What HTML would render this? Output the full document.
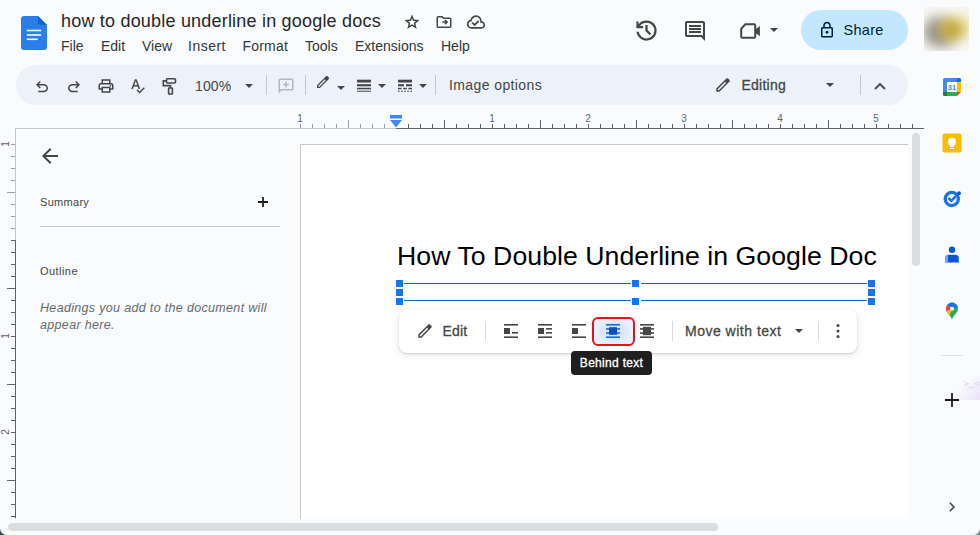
<!DOCTYPE html>
<html lang="en">
<head>
<meta charset="utf-8">
<title>how to double underline in google docs</title>
<style>
*{box-sizing:border-box;margin:0;padding:0}
html,body{width:980px;height:535px;overflow:hidden;background:#f9fbfd;font-family:"Liberation Sans",sans-serif;color:#1f1f1f}
.abs{position:absolute}
.t{position:absolute;white-space:nowrap;line-height:1}
svg{position:absolute;overflow:visible}
#title{left:61px;top:12px;font-size:18px;color:#26282a;letter-spacing:0.2px}
.menu{top:39px;font-size:14px;color:#33373a}
#toolbar{left:16px;top:65px;width:892px;height:40px;border-radius:20px;background:#edf2fa}
.tb{font-size:14px;color:#444746}
.sep{position:absolute;width:1px;background:#c7c7c7}
#share{left:801px;top:10px;width:107px;height:40px;border-radius:20px;background:#c2e7ff}
#sharet{left:843.500px;top:23px;font-size:14.5px;color:#001d35;letter-spacing:0.3px}
#panel{left:15px;top:128px;width:286px;height:391px;border-left:1px solid #c4c7c5;border-top:1px solid #c4c7c5;background:#f9fbfd}
#page{left:300px;top:144px;width:608px;height:375px;background:#fff;border-left:1px solid #c7c7c7;border-top:1px solid #c7c7c7}
#heading{left:397px;top:243px;letter-spacing:0.045px;font-size:26.670px;color:#000}
#ftb{left:398.500px;top:310px;width:458.500px;height:42.500px;border-radius:8px;background:#fff;box-shadow:0 1px 2px rgba(60,64,67,.2),0 2px 6px 2px rgba(60,64,67,.08)}
#tip{left:571px;top:351px;width:81px;height:24px;border-radius:4px;background:#1f1f1f;color:#fff;font-size:12px;text-align:center;line-height:24px;letter-spacing:0.3px;-webkit-text-stroke:0.3px #fff}
.rl{font-size:10px;color:#5f6368}
.h{position:absolute;width:7px;height:7px;background:#1a73e8}
</style>
</head>
<body>
<!-- header -->
<svg class="abs" style="left:21px;top:16px" width="26" height="34" viewBox="0 0 26 34"><path d="M3 0h14l9 9v22a3 3 0 0 1-3 3H3a3 3 0 0 1-3-3V3a3 3 0 0 1 3-3z" fill="#2b7de9"/><path d="M17 0l9 9h-6a3 3 0 0 1-3-3z" fill="#0c67d6"/><rect x="5.800" y="13.700" width="14.300" height="1.600" fill="#fff"/><rect x="5.800" y="18.200" width="14.300" height="1.600" fill="#fff"/><rect x="5.800" y="22.500" width="11" height="1.600" fill="#fff"/></svg>
<div class="t" id="title">how to double underline in google docs</div>
<div class="t menu" style="left:61px">File</div>
<div class="t menu" style="left:101px">Edit</div>
<div class="t menu" style="left:142px">View</div>
<div class="t menu" style="left:188px;letter-spacing:0.5px">Insert</div>
<div class="t menu" style="left:242.500px;letter-spacing:0.2px">Format</div>
<div class="t menu" style="left:305px">Tools</div>
<div class="t menu" style="left:355px">Extensions</div>
<div class="t menu" style="left:441px">Help</div>

<div class="abs" id="share"></div>
<div class="t" id="sharet">Share</div>

<!-- toolbar -->
<div class="abs" id="toolbar"></div>
<div class="t tb" style="left:195px;top:79px;letter-spacing:0.1px">100%</div>
<div class="t tb" style="left:449px;top:78px;letter-spacing:0.4px">Image options</div>
<div class="t tb" style="left:741.500px;top:78px;letter-spacing:0.25px;-webkit-text-stroke:0.3px #444746">Editing</div>
<div class="sep" style="left:266px;top:75px;height:20px"></div>
<div class="sep" style="left:305px;top:75px;height:20px"></div>
<div class="sep" style="left:435px;top:75px;height:20px"></div>
<div class="sep" style="left:860px;top:75px;height:20px"></div>


<!-- header icons -->
<svg style="left:403px;top:13px" width="18" height="18" viewBox="0 -960 960 960" fill="#444746"><path d="m354-287 126-76 126 77-33-144 111-96-146-13-58-136-58 135-146 13 111 97-33 143ZM233-120l65-281L80-590l288-25 112-265 112 265 288 25-218 189 65 281-247-149-247 149Zm247-350Z"/></svg>
<svg style="left:435px;top:13px" width="18" height="18" viewBox="0 -960 960 960" fill="#444746"><path d="M160-160q-33 0-56.500-23.500T80-240v-480q0-33 23.500-56.500T160-800h240l80 80h320q33 0 56.500 23.500T880-640v400q0 33-23.500 56.500T800-160H160Zm0-80h640v-400H447l-80-80H160v480Zm0 0v-480 480Zm400-100 140-140-140-140-56 56 44 44H400v80h148l-44 44 56 56Z"/></svg>
<svg style="left:466px;top:12px" width="20" height="20" viewBox="0 -960 960 960" fill="#444746"><path d="m414-280 226-226-58-58-169 169-84-84-57 57 142 142ZM260-160q-91 0-155.500-63T40-377q0-78 47-139t123-78q25-92 100-149t170-57q117 0 198.500 81.500T760-520q69 8 114.500 59.500T920-340q0 75-52.500 127.500T740-160H260Zm0-80h480q42 0 71-29t29-71q0-42-29-71t-71-29h-60v-80q0-83-58.500-141.500T480-720q-83 0-141.500 58.500T280-520h-20q-58 0-99 41t-41 99q0 58 41 99t99 41Zm220-240Z"/></svg>

<svg style="left:632.500px;top:16.500px" width="27" height="27" viewBox="0 -960 960 960" fill="#444746"><path d="M480-120q-138 0-240.500-91.500T122-440h82q14 104 92.500 172T480-200q117 0 198.500-81.500T760-480q0-117-81.500-198.500T480-760q-69 0-129 32t-101 88h110v80H120v-240h80v94q51-64 124.500-99T480-840q75 0 140.500 28.500t114 77q48.500 48.500 77 114T840-480q0 75-28.500 140.500t-77 114q-48.500 48.500-114 77T480-120Zm112-192L440-464v-216h80v184l128 128-56 56Z"/></svg>
<svg style="left:683px;top:19px" width="24" height="24" viewBox="0 -960 960 960" fill="#444746"><path d="M240-400h480v-80H240v80Zm0-120h480v-80H240v80Zm0-120h480v-80H240v80ZM880-80 720-240H160q-33 0-56.500-23.500T80-320v-480q0-33 23.500-56.500T160-880h640q33 0 56.500 23.500T880-800v720ZM160-320h594l46 45v-525H160v480Zm0 0v-480 480Z"/></svg>
<svg style="left:738px;top:19px" width="24" height="24" viewBox="0 0 24 24"><path d="M3.200 9.800L7.200 5.300H16.200a1 1 0 0 1 1 1V17.700a1 1 0 0 1-1 1H4.200a1 1 0 0 1-1-1z" fill="none" stroke="#444746" stroke-width="2" stroke-linejoin="round"/><path d="M17.500 10.200L21.900 7V17.200L17.500 14z" fill="#444746"/></svg>
<svg style="left:770px;top:28px" width="8" height="4" viewBox="0 0 8 4"><path d="M0 0h8L4 4z" fill="#444746"/></svg>
<svg style="left:818px;top:21px" width="18" height="18" viewBox="0 -960 960 960" fill="#001d35"><path d="M240-80q-33 0-56.500-23.500T160-160v-400q0-33 23.500-56.500T240-640h40v-80q0-83 58.500-141.500T480-920q83 0 141.500 58.500T680-720v80h40q33 0 56.500 23.500T800-560v400q0 33-23.500 56.500T720-80H240Zm0-80h480v-400H240v400Zm240-120q33 0 56.500-23.500T560-360q0-33-23.500-56.500T480-440q-33 0-56.500 23.500T400-360q0 33 23.500 56.500T480-280ZM360-640h240v-80q0-50-35-85t-85-35q-50 0-85 35t-35 85v80ZM240-160v-400 400Z"/></svg>

<!-- toolbar icons -->
<svg style="left:33px;top:78px" width="18" height="18" viewBox="0 -960 960 960" fill="#444746"><path d="M280-200v-80h284q63 0 109.500-40T720-420q0-60-46.500-100T564-560H312l104 104-56 56-200-200 200-200 56 56-104 104h252q97 0 166.500 63T800-420q0 94-69.500 157T564-200H280Z"/></svg>
<svg style="left:65px;top:78px" width="18" height="18" viewBox="0 -960 960 960" fill="#444746"><path d="M396-200q-97 0-166.500-63T160-420q0-94 69.500-157T396-640h252L544-744l56-56 200 200-200 200-56-56 104-104H396q-63 0-109.500 40T240-420q0 60 46.500 100T396-280h284v80H396Z"/></svg>
<svg style="left:97px;top:77px" width="18" height="18" viewBox="0 -960 960 960" fill="#444746"><path d="M640-640v-120H320v120h-80v-200h480v200h-80Zm-480 80h640-640Zm560 100q17 0 28.500-11.500T760-500q0-17-11.500-28.500T720-540q-17 0-28.500 11.500T680-500q0 17 11.500 28.500T720-460Zm-80 260v-160H320v160h320Zm80 80H240v-160H80v-240q0-51 35-85.500t85-34.500h560q51 0 85.500 34.500T880-520v240H720v160Zm80-240v-160q0-17-11.500-28.500T760-560H200q-17 0-28.500 11.500T160-520v160h80v-80h480v80h80Z"/></svg>
<svg style="left:129px;top:76.500px" width="18" height="18" viewBox="0 -960 960 960" fill="#444746"><path d="M564-80 394-250l56-56 114 114 226-226 56 56L564-80ZM120-320l194-520h94l194 520h-92l-46-132H254l-46 132h-88Zm162-208h156l-76-216h-4l-76 216Z"/></svg>
<svg style="left:161px;top:77px" width="18" height="18" viewBox="0 0 18 18" fill="none" stroke="#444746" stroke-width="1.600"><rect x="5.500" y="1.800" width="9" height="4.200" rx="1"/><path d="M5.500 3.900H2.300V8.600H9.500V11"/><rect x="7.600" y="11" width="3.800" height="6" rx="0.500"/></svg>
<svg style="left:245px;top:84px" width="8" height="4" viewBox="0 0 8 4"><path d="M0 0h8L4 4z" fill="#444746"/></svg>
<svg style="left:277px;top:77px" width="18" height="18" viewBox="0 -960 960 960" fill="#b4b8bd"><path d="M440-400h80v-120h120v-80H520v-120h-80v120H320v80h120v120ZM80-80v-720q0-33 23.500-56.500T160-880h640q33 0 56.500 23.500T880-800v480q0 33-23.500 56.500T800-240H240L80-80Zm126-240h594v-480H160v525l46-45Zm-46 0v-480 480Z"/></svg>
<svg style="left:315px;top:74px" width="16" height="16" viewBox="0 -960 960 960" fill="#444746"><path d="M200-200h57l391-391-57-57-391 391v57Zm-80 80v-170l528-527q12-11 26.500-17t30.500-6q16 0 31 6t26 18l55 56q12 11 17.500 26t5.500 30q0 16-5.500 30.500T817-647L290-120H120Zm640-584-56-56 56 56Zm-141 85-28-29 57 57-29-28Z"/></svg>
<svg style="left:337px;top:86px" width="8" height="4" viewBox="0 0 8 4"><path d="M0 0h8L4 4z" fill="#444746"/></svg>
<svg style="left:357px;top:79px" width="14" height="14" viewBox="0 0 14 14" fill="#444746"><rect x="0" y="0.700" width="14" height="2.800"/><rect x="0" y="5.200" width="14" height="2.100"/><rect x="0" y="8.800" width="14" height="1.500"/><rect x="0" y="11.700" width="14" height="1"/></svg>
<svg style="left:378px;top:84px" width="8" height="4" viewBox="0 0 8 4"><path d="M0 0h8L4 4z" fill="#444746"/></svg>
<svg style="left:398px;top:79px" width="14" height="14" viewBox="0 0 14 14" fill="#444746"><rect x="0" y="0.700" width="14" height="2.800"/><rect x="0" y="5.200" width="6" height="2.100"/><rect x="8" y="5.200" width="6" height="2.100"/><rect x="0" y="8.800" width="3.600" height="1.500"/><rect x="5.200" y="8.800" width="3.600" height="1.500"/><rect x="10.400" y="8.800" width="3.600" height="1.500"/><rect x="0" y="11.700" width="1.500" height="1.200"/><rect x="3.100" y="11.700" width="1.500" height="1.200"/><rect x="6.200" y="11.700" width="1.500" height="1.200"/><rect x="9.300" y="11.700" width="1.500" height="1.200"/><rect x="12.400" y="11.700" width="1.500" height="1.200"/></svg>
<svg style="left:419px;top:84px" width="8" height="4" viewBox="0 0 8 4"><path d="M0 0h8L4 4z" fill="#444746"/></svg>
<svg style="left:714px;top:76px" width="18" height="18" viewBox="0 -960 960 960" fill="#444746"><path d="M200-200h57l391-391-57-57-391 391v57Zm-80 80v-170l528-527q12-11 26.500-17t30.500-6q16 0 31 6t26 18l55 56q12 11 17.500 26t5.500 30q0 16-5.500 30.500T817-647L290-120H120Zm640-584-56-56 56 56Zm-141 85-28-29 57 57-29-28Z"/></svg>
<svg style="left:826px;top:83px" width="8" height="4" viewBox="0 0 8 4"><path d="M0 0h8L4 4z" fill="#444746"/></svg>
<svg style="left:874px;top:82px" width="12" height="8" viewBox="0 0 12 8" fill="none" stroke="#444746" stroke-width="1.800"><path d="M1 7L6 2L11 7"/></svg>


<!-- rulers -->
<div class="abs" style="left:300px;top:128px;width:97px;height:1px;background:#c4c7c5"></div>
<div class="abs" style="left:396px;top:128px;width:528px;height:1px;background:#5f6368"></div>
<div class="abs" style="left:300px;top:124px;width:1px;height:4px;background:#9aa0a6"></div>
<div class="abs" style="left:312px;top:124px;width:1px;height:4px;background:#9aa0a6"></div>
<div class="abs" style="left:324px;top:124px;width:1px;height:4px;background:#9aa0a6"></div>
<div class="abs" style="left:336px;top:124px;width:1px;height:4px;background:#9aa0a6"></div>
<div class="abs" style="left:348px;top:120px;width:1px;height:8px;background:#9aa0a6"></div>
<div class="abs" style="left:360px;top:124px;width:1px;height:4px;background:#9aa0a6"></div>
<div class="abs" style="left:372px;top:124px;width:1px;height:4px;background:#9aa0a6"></div>
<div class="abs" style="left:384px;top:124px;width:1px;height:4px;background:#9aa0a6"></div>
<div class="abs" style="left:408px;top:124px;width:1px;height:4px;background:#5f6368"></div>
<div class="abs" style="left:420px;top:124px;width:1px;height:4px;background:#5f6368"></div>
<div class="abs" style="left:432px;top:124px;width:1px;height:4px;background:#5f6368"></div>
<div class="abs" style="left:444px;top:120px;width:1px;height:8px;background:#5f6368"></div>
<div class="abs" style="left:456px;top:124px;width:1px;height:4px;background:#5f6368"></div>
<div class="abs" style="left:468px;top:124px;width:1px;height:4px;background:#5f6368"></div>
<div class="abs" style="left:480px;top:124px;width:1px;height:4px;background:#5f6368"></div>
<div class="abs" style="left:492px;top:124px;width:1px;height:4px;background:#5f6368"></div>
<div class="abs" style="left:504px;top:124px;width:1px;height:4px;background:#5f6368"></div>
<div class="abs" style="left:516px;top:124px;width:1px;height:4px;background:#5f6368"></div>
<div class="abs" style="left:528px;top:124px;width:1px;height:4px;background:#5f6368"></div>
<div class="abs" style="left:540px;top:120px;width:1px;height:8px;background:#5f6368"></div>
<div class="abs" style="left:552px;top:124px;width:1px;height:4px;background:#5f6368"></div>
<div class="abs" style="left:564px;top:124px;width:1px;height:4px;background:#5f6368"></div>
<div class="abs" style="left:576px;top:124px;width:1px;height:4px;background:#5f6368"></div>
<div class="abs" style="left:588px;top:124px;width:1px;height:4px;background:#5f6368"></div>
<div class="abs" style="left:600px;top:124px;width:1px;height:4px;background:#5f6368"></div>
<div class="abs" style="left:612px;top:124px;width:1px;height:4px;background:#5f6368"></div>
<div class="abs" style="left:624px;top:124px;width:1px;height:4px;background:#5f6368"></div>
<div class="abs" style="left:636px;top:120px;width:1px;height:8px;background:#5f6368"></div>
<div class="abs" style="left:648px;top:124px;width:1px;height:4px;background:#5f6368"></div>
<div class="abs" style="left:660px;top:124px;width:1px;height:4px;background:#5f6368"></div>
<div class="abs" style="left:672px;top:124px;width:1px;height:4px;background:#5f6368"></div>
<div class="abs" style="left:684px;top:124px;width:1px;height:4px;background:#5f6368"></div>
<div class="abs" style="left:696px;top:124px;width:1px;height:4px;background:#5f6368"></div>
<div class="abs" style="left:708px;top:124px;width:1px;height:4px;background:#5f6368"></div>
<div class="abs" style="left:720px;top:124px;width:1px;height:4px;background:#5f6368"></div>
<div class="abs" style="left:732px;top:120px;width:1px;height:8px;background:#5f6368"></div>
<div class="abs" style="left:744px;top:124px;width:1px;height:4px;background:#5f6368"></div>
<div class="abs" style="left:756px;top:124px;width:1px;height:4px;background:#5f6368"></div>
<div class="abs" style="left:768px;top:124px;width:1px;height:4px;background:#5f6368"></div>
<div class="abs" style="left:780px;top:124px;width:1px;height:4px;background:#5f6368"></div>
<div class="abs" style="left:792px;top:124px;width:1px;height:4px;background:#5f6368"></div>
<div class="abs" style="left:804px;top:124px;width:1px;height:4px;background:#5f6368"></div>
<div class="abs" style="left:816px;top:124px;width:1px;height:4px;background:#5f6368"></div>
<div class="abs" style="left:828px;top:120px;width:1px;height:8px;background:#5f6368"></div>
<div class="abs" style="left:840px;top:124px;width:1px;height:4px;background:#5f6368"></div>
<div class="abs" style="left:852px;top:124px;width:1px;height:4px;background:#5f6368"></div>
<div class="abs" style="left:864px;top:124px;width:1px;height:4px;background:#5f6368"></div>
<div class="abs" style="left:876px;top:124px;width:1px;height:4px;background:#5f6368"></div>
<div class="abs" style="left:888px;top:124px;width:1px;height:4px;background:#5f6368"></div>
<div class="abs" style="left:900px;top:124px;width:1px;height:4px;background:#5f6368"></div>
<div class="abs" style="left:912px;top:124px;width:1px;height:4px;background:#5f6368"></div>
<div class="t rl" style="left:294px;top:114px;width:12px;text-align:center">1</div>
<div class="t rl" style="left:486px;top:114px;width:12px;text-align:center">1</div>
<div class="t rl" style="left:582px;top:114px;width:12px;text-align:center">2</div>
<div class="t rl" style="left:678px;top:114px;width:12px;text-align:center">3</div>
<div class="t rl" style="left:774px;top:114px;width:12px;text-align:center">4</div>
<div class="t rl" style="left:870px;top:114px;width:12px;text-align:center">5</div>
<svg style="left:390px;top:115px" width="12" height="13" viewBox="0 0 12 13"><rect x="0" y="0" width="12" height="3.500" fill="#4285f4"/><path d="M0 5h12L6 12.500z" fill="#4285f4"/></svg>
<div class="abs" style="left:15px;top:240px;width:1px;height:278px;background:#5f6368;z-index:3"></div>
<div class="abs" style="left:11px;top:144px;width:4px;height:1px;background:#9aa0a6"></div>
<div class="abs" style="left:11px;top:156px;width:4px;height:1px;background:#9aa0a6"></div>
<div class="abs" style="left:11px;top:168px;width:4px;height:1px;background:#9aa0a6"></div>
<div class="abs" style="left:11px;top:180px;width:4px;height:1px;background:#9aa0a6"></div>
<div class="abs" style="left:7px;top:192px;width:8px;height:1px;background:#9aa0a6"></div>
<div class="abs" style="left:11px;top:204px;width:4px;height:1px;background:#9aa0a6"></div>
<div class="abs" style="left:11px;top:216px;width:4px;height:1px;background:#9aa0a6"></div>
<div class="abs" style="left:11px;top:228px;width:4px;height:1px;background:#9aa0a6"></div>
<div class="abs" style="left:11px;top:240px;width:4px;height:1px;background:#5f6368"></div>
<div class="abs" style="left:11px;top:252px;width:4px;height:1px;background:#5f6368"></div>
<div class="abs" style="left:11px;top:264px;width:4px;height:1px;background:#5f6368"></div>
<div class="abs" style="left:11px;top:276px;width:4px;height:1px;background:#5f6368"></div>
<div class="abs" style="left:7px;top:288px;width:8px;height:1px;background:#5f6368"></div>
<div class="abs" style="left:11px;top:300px;width:4px;height:1px;background:#5f6368"></div>
<div class="abs" style="left:11px;top:312px;width:4px;height:1px;background:#5f6368"></div>
<div class="abs" style="left:11px;top:324px;width:4px;height:1px;background:#5f6368"></div>
<div class="abs" style="left:11px;top:336px;width:4px;height:1px;background:#5f6368"></div>
<div class="abs" style="left:11px;top:348px;width:4px;height:1px;background:#5f6368"></div>
<div class="abs" style="left:11px;top:360px;width:4px;height:1px;background:#5f6368"></div>
<div class="abs" style="left:11px;top:372px;width:4px;height:1px;background:#5f6368"></div>
<div class="abs" style="left:7px;top:384px;width:8px;height:1px;background:#5f6368"></div>
<div class="abs" style="left:11px;top:396px;width:4px;height:1px;background:#5f6368"></div>
<div class="abs" style="left:11px;top:408px;width:4px;height:1px;background:#5f6368"></div>
<div class="abs" style="left:11px;top:420px;width:4px;height:1px;background:#5f6368"></div>
<div class="abs" style="left:11px;top:432px;width:4px;height:1px;background:#5f6368"></div>
<div class="abs" style="left:11px;top:444px;width:4px;height:1px;background:#5f6368"></div>
<div class="abs" style="left:11px;top:456px;width:4px;height:1px;background:#5f6368"></div>
<div class="abs" style="left:11px;top:468px;width:4px;height:1px;background:#5f6368"></div>
<div class="abs" style="left:7px;top:480px;width:8px;height:1px;background:#5f6368"></div>
<div class="abs" style="left:11px;top:492px;width:4px;height:1px;background:#5f6368"></div>
<div class="abs" style="left:11px;top:504px;width:4px;height:1px;background:#5f6368"></div>
<div class="abs" style="left:11px;top:516px;width:4px;height:1px;background:#5f6368"></div>
<div class="t rl" style="left:0px;top:138px;width:12px;height:12px;line-height:12px;text-align:center;transform:rotate(-90deg)">1</div>
<div class="t rl" style="left:0px;top:330px;width:12px;height:12px;line-height:12px;text-align:center;transform:rotate(-90deg)">1</div>
<div class="t rl" style="left:0px;top:426px;width:12px;height:12px;line-height:12px;text-align:center;transform:rotate(-90deg)">2</div>

<!-- left panel -->
<div class="abs" id="panel"></div>
<div class="t" style="left:40px;top:197px;font-size:11px;color:#444746;letter-spacing:0.3px">Summary</div>
<div class="abs" style="left:40px;top:226px;width:240px;height:1px;background:#c4c7c5"></div>
<div class="t" style="left:40px;top:266px;font-size:11px;color:#444746;letter-spacing:0.45px">Outline</div>
<div class="t" style="left:40px;top:300px;font-size:12.500px;color:#676b70;font-style:italic;line-height:17px;white-space:normal;width:250px;letter-spacing:0.33px">Headings you add to the document will appear here.</div>

<!-- page -->
<div class="abs" id="page"></div>
<div class="t" id="heading">How To Double Underline in Google Doc</div>

<!-- floating toolbar -->
<div class="abs" id="ftb"></div>
<div class="t" style="left:442.500px;top:324px;font-size:14px;color:#444746;letter-spacing:0.15px;-webkit-text-stroke:0.3px #444746">Edit</div>
<div class="t" style="left:685px;top:324px;font-size:14px;color:#444746;letter-spacing:0.5px;-webkit-text-stroke:0.3px #444746">Move with text</div>

<!-- panel icons -->
<svg style="left:38px;top:144px" width="24" height="24" viewBox="0 -960 960 960" fill="#444746"><path d="m313-440 224 224-57 56-320-320 320-320 57 56-224 224h487v80H313Z"/></svg>
<svg style="left:258px;top:197px" width="10" height="10" viewBox="0 0 10 10" stroke="#1f1f1f" stroke-width="1.800"><path d="M5 0V10M0 5H10"/></svg>

<!-- selection -->
<div class="abs" style="left:404px;top:283px;width:226.500px;height:1px;background:#1a5fb4"></div><div class="abs" style="left:640.500px;top:283px;width:226px;height:1px;background:#1a5fb4"></div>
<div class="abs" style="left:404px;top:300px;width:226.500px;height:1px;background:#1a5fb4"></div><div class="abs" style="left:640.500px;top:300px;width:226px;height:1px;background:#1a5fb4"></div>
<div class="h" style="left:396px;top:280px"></div>
<div class="h" style="left:396px;top:289px"></div>
<div class="h" style="left:396px;top:298px"></div>
<div class="h" style="left:632px;top:280px"></div>
<div class="h" style="left:632px;top:298px"></div>
<div class="h" style="left:868px;top:280px"></div>
<div class="h" style="left:868px;top:289px"></div>
<div class="h" style="left:868px;top:298px"></div>

<!-- scrollbars -->
<div class="abs" style="left:912px;top:133px;width:8px;height:132.500px;border-radius:4px;background:#dadce0"></div>
<div class="abs" style="left:8px;top:523px;width:710px;height:7.500px;border-radius:4px;background:#dadce0"></div>

<!-- avatar -->
<div class="abs" style="left:924px;top:7px;width:45px;height:44px;overflow:hidden;background:#f6f6f3"><div class="abs" style="left:-10px;top:-10px;width:65px;height:64px;filter:blur(4px);background:radial-gradient(ellipse 15px 14px at 37px 33px,#b99d3c 0%,rgba(200,175,75,.85) 55%,rgba(220,205,130,0) 100%),radial-gradient(ellipse 20px 18px at 42px 31px,#dcc764 0%,rgba(232,220,140,.85) 50%,rgba(240,235,190,0) 100%),radial-gradient(ellipse 24px 21px at 27px 35px,#857d6f 0%,rgba(150,145,132,.85) 50%,rgba(246,246,243,0) 100%),#f6f6f3"></div></div>

<!-- side panel -->
<svg style="left:943px;top:78px" width="18" height="18" viewBox="0 0 18 18"><rect x="4" y="4" width="10" height="10" fill="#fff"/><path d="M0 1.500A1.500 1.500 0 0 1 1.500 0H14v4H4v10H0z" fill="#4285f4"/><path d="M14 0h2.500A1.500 1.500 0 0 1 18 1.500V4h-4z" fill="#1967d2"/><rect x="14" y="4" width="4" height="10" fill="#fbbc04"/><path d="M14 14h4l-4 4z" fill="#ea4335"/><rect x="4" y="14" width="10" height="4" fill="#34a853"/><path d="M0 14h4v4H1.500A1.500 1.500 0 0 1 0 16.500z" fill="#188038"/><text x="9" y="12.300" font-family="Liberation Sans, sans-serif" font-size="7.500" font-weight="bold" fill="#4285f4" text-anchor="middle">31</text></svg>
<svg style="left:942px;top:133px" width="20" height="20" viewBox="0 0 20 20"><rect x="0.500" y="0.500" width="19" height="19" rx="2" fill="#fbbc04"/><circle cx="10" cy="8.800" r="4" fill="#fff"/><rect x="8" y="11.500" width="4" height="2.500" fill="#fff"/><rect x="8" y="14.800" width="4" height="1.200" fill="#fff"/></svg>
<svg style="left:942px;top:189px" width="20" height="20" viewBox="0 0 20 20" fill="none"><circle cx="9.800" cy="10" r="6.600" stroke="#1a73e8" stroke-width="3.300"/><path d="M6.300 8.800l3 3L15.800 5.200" stroke="#1a73e8" stroke-width="2.600"/><circle cx="17" cy="4.200" r="1.900" fill="#0b57d0"/></svg>
<svg style="left:944px;top:246px" width="16" height="18" viewBox="0 0 16 18"><circle cx="8" cy="3.800" r="3.200" fill="#0b57d0"/><path d="M1 16.500V12.700a4 4 0 0 1 4-4H11a4 4 0 0 1 4 4V16.500z" fill="#0b57d0"/><path d="M1 16.500V12.700a4 4 0 0 1 3-3.900V16.500z" fill="#7aa5ee"/><path d="M15 16.500V12.700a4 4 0 0 0-1.200-2.900V16.500z" fill="#3c78dc"/></svg>
<svg style="left:945px;top:302px" width="14" height="18" viewBox="0 0 14 18"><defs><clipPath id="pin"><path d="M7 .6A6.100 6.100 0 0 0 .9 6.700C.9 10.500 5.600 13 7 17.400 8.400 13 13.100 10.500 13.100 6.700A6.100 6.100 0 0 0 7 .6z"/></clipPath></defs><g clip-path="url(#pin)"><rect width="14" height="18" fill="#34a853"/><path d="M7 6.700L1.500 2 3-1H14V5z" fill="#1a73e8"/><path d="M7 6.700L1.500 2-1 3V9.500L1.200 9.900z" fill="#ea4335"/><path d="M7 6.700L.5 9.500 4 14.500z" fill="#fbbc04"/><circle cx="7" cy="6.700" r="2" fill="#fff"/></g></svg>
<div class="abs" style="left:941px;top:355px;width:22px;height:1px;background:#dfe1e5"></div>
<div class="abs" style="left:946px;top:376px;width:34px;height:24px;border-top-left-radius:10px;background:linear-gradient(135deg,rgba(249,251,253,0) 42%,#eae2f8 100%)"></div>
<div class="t" style="left:963px;top:380px;font-size:7.500px;letter-spacing:-0.8px;color:#cfcfd8;font-family:'DejaVu Sans',sans-serif">&gt;‿&lt;</div>
<svg style="left:945px;top:393px" width="14" height="14" viewBox="0 0 14 14" stroke="#1f1f1f" stroke-width="1.800"><path d="M7 0V14M0 7H14"/></svg>
<svg style="left:949px;top:502px" width="6" height="10" viewBox="0 0 6 10" fill="none" stroke="#444746" stroke-width="1.600"><path d="M0.800 0.800L5 5L0.800 9.200"/></svg>

<!-- floating toolbar icons -->
<svg style="left:416px;top:322px" width="18" height="18" viewBox="0 -960 960 960" fill="#444746"><path d="M200-200h57l391-391-57-57-391 391v57Zm-80 80v-170l528-527q12-11 26.500-17t30.500-6q16 0 31 6t26 18l55 56q12 11 17.500 26t5.500 30q0 16-5.500 30.500T817-647L290-120H120Zm640-584-56-56 56 56Zm-141 85-28-29 57 57-29-28Z"/></svg>
<div class="sep" style="left:485px;top:321px;height:20px;background:#dadce0"></div>
<svg style="left:504px;top:324px" width="14" height="14" viewBox="0 0 14 14" fill="#444746"><rect x="0" y="0" width="14" height="1.600"/><rect x="0" y="4" width="6" height="6"/><rect x="8" y="8" width="6" height="1.600"/><rect x="0" y="12.400" width="14" height="1.600"/></svg>
<svg style="left:538px;top:324px" width="14" height="14" viewBox="0 0 14 14" fill="#444746"><rect x="0" y="0" width="14" height="1.600"/><rect x="0" y="4" width="6" height="6"/><rect x="8" y="4" width="6" height="1.600"/><rect x="8" y="8" width="6" height="1.600"/><rect x="0" y="12.400" width="14" height="1.600"/></svg>
<svg style="left:572px;top:324px" width="14" height="14" viewBox="0 0 14 14" fill="#444746"><rect x="0" y="0" width="14" height="1.600"/><rect x="0" y="4" width="6" height="6"/><rect x="0" y="12.400" width="14" height="1.600"/></svg>
<div class="abs" style="left:592px;top:316.500px;width:42.500px;height:29.500px;border-radius:6px;border:2px solid #e2131b;background:radial-gradient(ellipse 17px 12px at 50% 50%,#d5e3fc 0%,#d9e6fc 70%,#e9f0fd 100%)"></div>
<svg style="left:606px;top:324px" width="14" height="14" viewBox="0 0 14 14" fill="#1a6be0"><rect x="0" y="0" width="14" height="1.600"/><rect x="0" y="4.100" width="14" height="1.600"/><rect x="0" y="8.300" width="14" height="1.600"/><rect x="0" y="12.400" width="14" height="1.600"/><rect x="3" y="3.200" width="8" height="7.600" fill="#0b50c0"/></svg>
<svg style="left:640px;top:324px" width="14" height="14" viewBox="0 0 14 14" fill="#444746"><rect x="0" y="0" width="14" height="1.600"/><rect x="0" y="4.100" width="14" height="1.600"/><rect x="0" y="8.300" width="14" height="1.600"/><rect x="0" y="12.400" width="14" height="1.600"/><rect x="3" y="2.800" width="8" height="8.400"/></svg>
<div class="sep" style="left:672px;top:321px;height:20px;background:#dadce0"></div>
<svg style="left:795px;top:329px" width="8" height="4" viewBox="0 0 8 4"><path d="M0 0h8L4 4z" fill="#444746"/></svg>
<div class="sep" style="left:818px;top:321px;height:20px;background:#dadce0"></div>
<svg style="left:836px;top:324px" width="4" height="14" viewBox="0 0 4 14" fill="#444746"><circle cx="2" cy="1.600" r="1.500"/><circle cx="2" cy="7" r="1.500"/><circle cx="2" cy="12.400" r="1.500"/></svg>
<div class="abs" id="tip">Behind text</div>


<!-- window corners -->
<div class="abs" style="left:0;top:528px;width:7px;height:7px;background:radial-gradient(circle at 100% 0,rgba(58,74,85,0) 6.400px,#3a4a55 7.600px)"></div>
<div class="abs" style="left:973px;top:528px;width:7px;height:7px;background:radial-gradient(circle at 0 0,rgba(95,120,120,0) 6.400px,#6f8886 7.600px)"></div>
</body>
</html>
